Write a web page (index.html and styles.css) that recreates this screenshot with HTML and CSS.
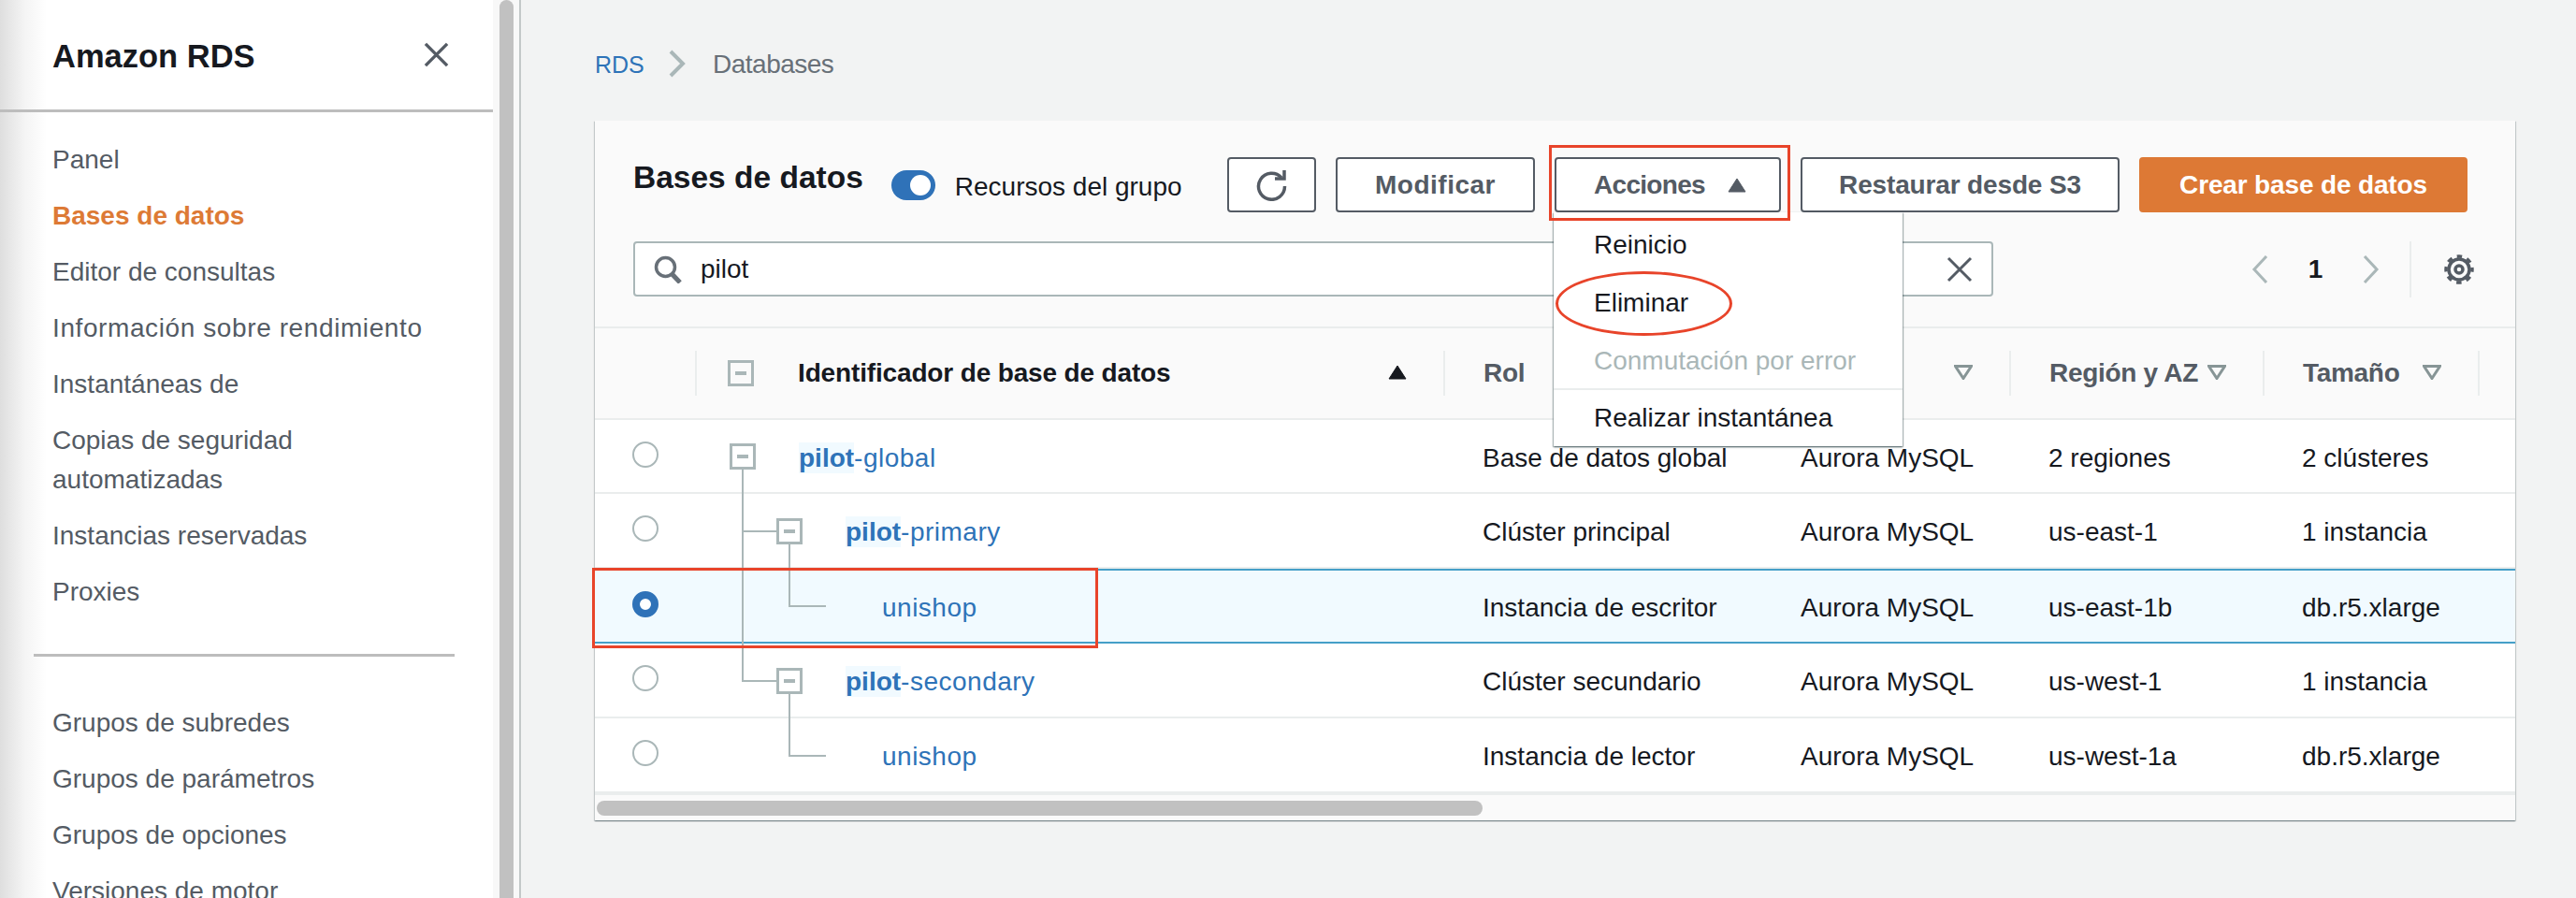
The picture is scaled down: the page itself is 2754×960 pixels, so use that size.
FILE: index.html
```html
<!DOCTYPE html>
<html lang="es">
<head>
<meta charset="utf-8">
<title>Amazon RDS</title>
<link rel="stylesheet" href="styles.css">
</head>
<body>
<div class="app">
  <aside class="sidebar">
    <header class="side-head">
      <h2 class="side-title">Amazon RDS</h2>
      <svg class="side-close" viewBox="0 0 28 28"><path d="M2 2 26 26M26 2 2 26"/></svg>
    </header>
    <nav class="side-nav">
      <a class="nav-item">Panel</a>
      <a class="nav-item active">Bases de datos</a>
      <a class="nav-item">Editor de consultas</a>
      <a class="nav-item nav-wide">Información sobre rendimiento</a>
      <a class="nav-item">Instantáneas de</a>
      <a class="nav-item">Copias de seguridad automatizadas</a>
      <a class="nav-item">Instancias reservadas</a>
      <a class="nav-item">Proxies</a>
    </nav>
    <hr class="side-rule">
    <nav class="side-nav">
      <a class="nav-item">Grupos de subredes</a>
      <a class="nav-item">Grupos de parámetros</a>
      <a class="nav-item">Grupos de opciones</a>
      <a class="nav-item">Versiones de motor</a>
    </nav>
  </aside>
  <div class="page-scroll"><div class="page-thumb"></div></div>
  <main class="main">
    <div class="crumbs">
      <a class="crumb-link">RDS</a>
      <svg class="crumb-sep" viewBox="0 0 18 30"><path d="M2 2 15 15 2 28"/></svg>
      <span class="crumb-now">Databases</span>
    </div>
    <section class="panel">
      <div class="toolbar">
        <h1 class="panel-title">Bases de datos</h1>
        <span class="toggle"><span class="knob"></span></span>
        <span class="toggle-label">Recursos del grupo</span>
        <div class="actions">
          <button class="btn btn-icon"><svg class="ico-refresh" viewBox="0 0 34 34"><path d="M27 9A14 14 0 1 0 30.5 18"/><path d="M20 10H30V1"/></svg></button>
          <button class="btn btn-mod">Modificar</button>
          <button class="btn btn-act">Acciones<svg class="caret" viewBox="0 0 20 16"><path d="M10 1 19 15H1Z"/></svg></button>
          <button class="btn btn-res">Restaurar desde S3</button>
          <button class="btn btn-primary">Crear base de datos</button>
        </div>
      </div>
      <div class="filter-row">
        <div class="search">
          <svg class="ico-search" viewBox="0 0 30 30"><circle cx="12.5" cy="12.5" r="10"/><path class="thick" d="M19.5 20 28 29"/></svg>
          <span class="search-text">pilot</span>
          <svg class="ico-clear" viewBox="0 0 28 28"><path d="M2 2 26 26M26 2 2 26"/></svg>
        </div>
        <div class="pager">
          <svg class="pg-arrow" viewBox="0 0 18 30"><path d="M16 1 3 15 16 29"/></svg>
          <span class="pg-num">1</span>
          <svg class="pg-arrow" viewBox="0 0 18 30"><path d="M2 1 15 15 2 29"/></svg>
        </div>
        <div class="settings">
          <svg class="ico-gear" viewBox="0 0 32 32"><circle cx="16" cy="16" r="11"/><circle class="teeth" cx="16" cy="16" r="14"/><circle cx="16" cy="16" r="4"/></svg>
        </div>
      </div>

      <div class="tbl-head tbl-grid">
        <div class="th th-radio"></div>
        <div class="th th-id">
          <svg class="tree-box" viewBox="0 0 28 28"><rect x="1.5" y="1.5" width="25" height="25"/><rect class="minus" x="8" y="12" width="12" height="4"/></svg>
          <span class="th-label strong">Identificador de base de datos</span>
          <svg class="sort" viewBox="0 0 20 16"><path d="M10 1 19 15H1Z"/></svg>
        </div>
        <div class="th"><span class="th-label">Rol</span></div>
        <div class="th th-right"><svg class="filter" viewBox="0 0 20 16"><path d="M1.5 1.5H18.5L10 14.5Z"/></svg></div>
        <div class="th"><span class="th-label">Región y AZ</span><svg class="filter" viewBox="0 0 20 16"><path d="M1.5 1.5H18.5L10 14.5Z"/></svg></div>
        <div class="th"><span class="th-label">Tamaño</span><svg class="filter" viewBox="0 0 20 16"><path d="M1.5 1.5H18.5L10 14.5Z"/></svg></div>
        <div class="th th-end"></div>
      </div>

      <div class="tbl-body">
        <div class="row tbl-grid">
          <div class="td"><span class="radio"></span></div>
          <div class="td td-id lvl-0"><a class="link"><mark class="hit">pilot</mark>-global</a></div>
          <div class="td">Base de datos global</div>
          <div class="td">Aurora MySQL</div>
          <div class="td">2 regiones</div>
          <div class="td">2 clústeres</div>
          <div class="td"></div>
        </div>
        <div class="row tbl-grid">
          <div class="td"><span class="radio"></span></div>
          <div class="td td-id lvl-1"><a class="link"><mark class="hit">pilot</mark>-primary</a></div>
          <div class="td">Clúster principal</div>
          <div class="td">Aurora MySQL</div>
          <div class="td">us-east-1</div>
          <div class="td">1 instancia</div>
          <div class="td"></div>
        </div>
        <div class="row row-selected tbl-grid">
          <div class="td"><span class="radio radio-on"></span></div>
          <div class="td td-id lvl-2"><a class="link">unishop</a></div>
          <div class="td">Instancia de escritor</div>
          <div class="td">Aurora MySQL</div>
          <div class="td">us-east-1b</div>
          <div class="td">db.r5.xlarge</div>
          <div class="td"></div>
        </div>
        <div class="row tbl-grid">
          <div class="td"><span class="radio"></span></div>
          <div class="td td-id lvl-1"><a class="link"><mark class="hit">pilot</mark>-secondary</a></div>
          <div class="td">Clúster secundario</div>
          <div class="td">Aurora MySQL</div>
          <div class="td">us-west-1</div>
          <div class="td">1 instancia</div>
          <div class="td"></div>
        </div>
        <div class="row tbl-grid">
          <div class="td"><span class="radio"></span></div>
          <div class="td td-id lvl-2"><a class="link">unishop</a></div>
          <div class="td">Instancia de lector</div>
          <div class="td">Aurora MySQL</div>
          <div class="td">us-west-1a</div>
          <div class="td">db.r5.xlarge</div>
          <div class="td"></div>
        </div>
        <svg class="tree" viewBox="0 0 260 370">
          <path class="tree-line" d="M158 53V279H194M158 119H194M208 133V199H247M208 293V359H247"/>
          <g class="tree-node"><rect x="145.5" y="26.5" width="25" height="25"/><rect class="minus" x="152" y="37" width="12" height="4"/></g>
          <g class="tree-node"><rect x="195.5" y="106.5" width="25" height="25"/><rect class="minus" x="202" y="117" width="12" height="4"/></g>
          <g class="tree-node"><rect x="195.5" y="266.5" width="25" height="25"/><rect class="minus" x="202" y="277" width="12" height="4"/></g>
        </svg>
      </div>
      <div class="hscroll"><div class="hthumb"></div></div>

      <ul class="menu">
        <li class="menu-item">Reinicio</li>
        <li class="menu-item">Eliminar</li>
        <li class="menu-item disabled">Conmutación por error</li>
        <li class="menu-item split">Realizar instantánea</li>
      </ul>
      <div class="mark mark-actions"></div>
      <div class="mark mark-delete"></div>
      <div class="mark mark-row"></div>
    </section>
  </main>
</div>
</body>
</html>
```
FILE: styles.css
```css
* { box-sizing: border-box; }
html, body { margin: 0; height: 100%; overflow: hidden; }
body {
  font-family: "Liberation Sans", Arial, sans-serif;
  font-size: 28px;
  color: #16191f;
  background: #f2f3f3;
}
.app { display: flex; width: 2754px; height: 960px; overflow: hidden; }

/* sidebar */
.sidebar {
  width: 527px;
  flex: none;
  background: linear-gradient(90deg, #dedede 0, #f4f4f4 26px, #ffffff 50px);
}
.side-head {
  height: 120px;
  padding: 0 47px 0 56px;
  display: flex;
  align-items: center;
  justify-content: space-between;
  border-bottom: 3px solid #bdbdbd;
}
.side-title { margin: 2px 0 0; font-size: 34.5px; line-height: 44px; font-weight: 700; }
.side-close { width: 27px; height: 27px; fill: none; stroke: #545b64; stroke-width: 3.5; }
.side-nav { display: flex; flex-direction: column; padding-left: 56px; padding-right: 40px; }
.side-nav:first-of-type { padding-top: 21px; }
.nav-item {
  display: block;
  padding: 9px 0;
  line-height: 42px;
  color: #545b64;
}
.nav-item.nav-wide { letter-spacing: .6px; }
.nav-item.active { color: #dd7a35; font-weight: 700; }
.side-rule { margin: 36px 41px 41px 36px; border: 0; border-top: 3px solid #bdbdbd; }

.page-scroll {
  width: 30px;
  flex: none;
  padding: 0 6px 0 7px;
  background: #f8f8f8;
  border-right: 2px solid #c3c8c8;
}
.page-thumb { height: 100%; width: 15px; background: #c1c1c1; border-radius: 8px 8px 0 0; }

/* main */
.main { flex: 1; padding: 0 65px 0 79px; min-width: 0; }
.crumbs { height: 129px; padding-top: 48px; display: flex; align-items: flex-start; line-height: 42px; }
.crumb-link { color: #2e73b8; width: 50px; font-size: 25px; }
.crumb-sep { width: 18px; height: 30px; margin: 5px 0 0 29px; fill: none; stroke: #aab7b8; stroke-width: 4; }
.crumb-now { margin-left: 29px; color: #687078; letter-spacing: -.5px; }

.panel {
  position: relative;
  background: #fff;
  box-shadow: 0 1px 1px 0 rgba(0,28,36,.3), 1px 1px 1px 0 rgba(0,28,36,.15), -1px 1px 1px 0 rgba(0,28,36,.15);
}
.toolbar {
  display: flex;
  align-items: flex-start;
  padding: 39px 51px 0 41px;
  height: 129px;
  background: #fafafa;
}
.panel-title { margin: 0; font-size: 33.5px; line-height: 44px; font-weight: 700; }
.toggle {
  width: 47px;
  height: 32px;
  margin: 14px 0 0 30px;
  padding: 5px;
  display: flex;
  justify-content: flex-end;
  background: #2f72b8;
  border-radius: 16px;
}
.knob { width: 22px; height: 22px; background: #fff; border-radius: 50%; }
.toggle-label { margin: 11px 0 0 21px; line-height: 42px; }
.actions { margin-left: auto; display: flex; gap: 21px; }
.btn {
  height: 59px;
  padding: 1px 0 0;
  display: flex;
  align-items: center;
  justify-content: center;
  font: 700 28px/1 "Liberation Sans", Arial, sans-serif;
  letter-spacing: .5px;
  color: #545b64;
  background: #fff;
  border: 2px solid #545b64;
  border-radius: 4px;
}
.btn-icon { width: 95px; }
.btn-mod { width: 213px; }
.btn-act { width: 242px; gap: 24px; justify-content: flex-start; padding-left: 40px; letter-spacing: -.7px; }
.btn-res { width: 341px; letter-spacing: -.15px; }
.btn-primary { width: 351px; letter-spacing: -.15px; color: #fff; background: #dd7935; border-color: #dd7935; }
.ico-refresh { width: 34px; height: 34px; fill: none; stroke: #545b64; stroke-width: 3.5; }
.caret { width: 20px; height: 16px; fill: #545b64; stroke: #545b64; stroke-linejoin: round; stroke-width: 1; }

.filter-row {
  display: flex;
  align-items: center;
  height: 91px;
  padding: 0 0 32px 41px;
  background: #fafafa;
}
.search {
  width: 1454px;
  height: 59px;
  display: flex;
  align-items: center;
  padding: 0 20px;
  background: #fff;
  border: 2px solid #aab7b8;
  border-radius: 4px;
}
.ico-search { width: 30px; height: 30px; fill: none; stroke: #687078; stroke-width: 3.5; }
.ico-search .thick { stroke-width: 5; }
.search-text { margin-left: 20px; flex: 1; color: #16191f; }
.ico-clear { width: 28px; height: 28px; fill: none; stroke: #545b64; stroke-width: 3; }
.pager { margin-left: 276px; width: 137px; display: flex; align-items: center; justify-content: space-between; }
.pg-arrow { width: 18px; height: 30px; fill: none; stroke: #aab7b8; stroke-width: 3; }
.pg-num { font-weight: 700; }
.settings {
  margin-left: 32px;
  height: 60px;
  padding-left: 35px;
  display: flex;
  align-items: center;
  border-left: 2px solid #eaeded;
}
.ico-gear { width: 32px; height: 32px; fill: none; stroke: #545b64; stroke-width: 3.5; }
.ico-gear .teeth { stroke-dasharray: 5.5 5.496; stroke-dashoffset: 2.75; }

/* table */
.tbl-grid { display: grid; grid-template-columns: 109px 800px 340px 265px 271px 230px 38px; }
.tbl-head {
  height: 100px;
  align-items: center;
  background: #fafafa;
  border-top: 2px solid #eaeded;
  border-bottom: 2px solid #eaeded;
}
.th {
  height: 48px;
  padding: 0 39px 0 41px;
  display: flex;
  align-items: center;
  justify-content: space-between;
  border-right: 2px solid #eaeded;
}
.th-end { border-right: 0; }
.th-right { justify-content: flex-end; }
.th-id { padding-left: 33px; }
.th-label { font-weight: 700; color: #545b64; white-space: nowrap; letter-spacing: -.3px; }
.th-label.strong { margin: 0 auto 0 47px; color: #16191f; letter-spacing: -.15px; }
.tree-box { width: 28px; height: 28px; flex: none; margin-top: -1px; fill: #fafafa; stroke: #aab7b8; stroke-width: 3; }
.tree-box .minus { fill: #aab7b8; stroke: none; }
.sort { width: 20px; height: 16px; fill: #16191f; stroke: #16191f; stroke-linejoin: round; stroke-width: 1; margin-bottom: 2px; }
.filter { width: 20px; height: 16px; flex: none; fill: none; stroke: #879596; stroke-width: 3; margin-bottom: 2px; }

.tbl-body { position: relative; }
.row { height: 80px; align-items: center; border-bottom: 2px solid #eaeded; background: #fff; }
.row-selected { background: #f1faff; border-top: 2px solid #459fc8; border-bottom: 2px solid #459fc8; }
.row:nth-child(1) { height: 79px; }
.td { padding: 4px 0 0 40px; white-space: nowrap; }
.td:first-child { padding: 0 0 4px 40px; display: flex; }
.td-id.lvl-0 { padding-left: 109px; }
.td-id.lvl-1 { padding-left: 159px; }
.td-id.lvl-2 { padding-left: 198px; }
.radio { width: 28px; height: 28px; background: #fff; border: 2px solid #aab7b8; border-radius: 50%; }
.radio-on { border: 8px solid #2f72b8; }
.link { color: #2e73b8; letter-spacing: .5px; }
.hit { color: inherit; background: #f1faff; font-weight: 700; padding: 1px 0; letter-spacing: 0; }
.tree { position: absolute; left: 0; top: 0; width: 260px; height: 370px; pointer-events: none; }
.tree-line { fill: none; stroke: #aab7b8; stroke-width: 2; }
.tree-node rect { fill: #fff; stroke: #aab7b8; stroke-width: 3; }
.tree-node .minus { fill: #aab7b8; stroke: none; }

.hscroll { height: 29px; padding: 6px 0 0 2px; background: #fafafa; border-top: 2px solid #eaeded; }
.hthumb { width: 947px; height: 16px; background: #c1c1c1; border-radius: 8px; }

/* dropdown */
.menu {
  position: absolute;
  left: 1025px;
  top: 98px;
  width: 373px;
  height: 250px;
  margin: 0;
  padding: 4px 0 0;
  list-style: none;
  background: #fff;
  box-shadow: 0 1px 2px 0 rgba(0,28,36,.5), 1px 1px 1px 0 rgba(0,28,36,.2), -1px 1px 1px 0 rgba(0,28,36,.2);
}
.menu-item { height: 62px; padding: 0 0 0 43px; line-height: 62px; white-space: nowrap; }
.menu-item.disabled { color: #aab7b8; height: 60px; }
.menu-item.split { border-top: 2px solid #eaeded; line-height: 60px; }

/* annotations */
.mark { position: absolute; border: 3px solid #e8442a; }
.mark-actions { left: 1020px; top: 26px; width: 258px; height: 81px; }
.mark-delete { left: 1027px; top: 161px; width: 189px; height: 69px; border-radius: 50%; }
.mark-row { left: -3px; top: 478px; width: 541px; height: 86px; }
```
